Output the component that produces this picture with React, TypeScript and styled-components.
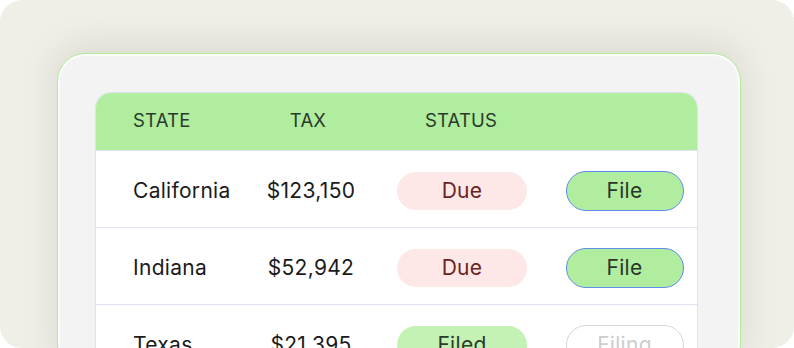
import React from "react";
import styled, { createGlobalStyle } from "styled-components";

const GlobalStyle = createGlobalStyle`
  html, body {
    margin: 0;
    padding: 0;
    background: #ffffff;
  }
  body {
    font-family: Inter, "Liberation Sans", sans-serif;
  }
`;

const Canvas = styled.div`
  width: 794px;
  height: 348px;
  box-sizing: border-box;
  padding: 53px 53px 0 57px;
  border-radius: 22px;
  background: #efefe8;
  overflow: hidden;
`;

const Frame = styled.div`
  box-sizing: border-box;
  height: 320px;
  padding: 38px 42px 0 37px;
  border: 1.5px solid #b0eb9a;
  border-radius: 28px;
  background: #f3f3f4;
  box-shadow: inset 0 0 0 2px #fbfbfb, 0 -6px 36px rgba(110, 110, 90, 0.18);
`;

const Table = styled.div`
  background: #ffffff;
  border: 1px solid #e3e1f1;
  border-bottom: none;
  border-radius: 16px 16px 0 0;
  overflow: hidden;
`;

const columns = "154px 122px 180px 1fr";

const HeaderRow = styled.div`
  display: grid;
  grid-template-columns: ${columns};
  align-items: center;
  height: 57px;
  background: #b0ed9e;
  border-bottom: 1px solid #e3e1f1;
`;

const HeadCell = styled.div<{ $align?: "left" | "center"; $shift?: number }>`
  text-align: ${(p) => p.$align ?? "center"};
  padding-left: ${(p) => (p.$align === "left" ? "37px" : "0")};
  padding-right: ${(p) => (p.$shift ? `${p.$shift}px` : "0")};
  font-size: 18.5px;
  letter-spacing: 0.2px;
  color: #2c3a2c;
  margin-top: -3px;
`;

const Row = styled.div`
  display: grid;
  grid-template-columns: ${columns};
  align-items: center;
  box-sizing: border-box;
  height: 77px;
  padding-top: 3px;
  border-bottom: 1px solid #e3e1f1;
`;

const Cell = styled.div<{ $align?: "left" | "center" }>`
  display: flex;
  justify-content: ${(p) => (p.$align === "left" ? "flex-start" : "center")};
  padding-left: ${(p) => (p.$align === "left" ? "37px" : "0")};
  font-size: 21px;
  letter-spacing: 0.3px;
  color: #1b1b1b;
`;

const Pill = styled.span<{ $tone: "due" | "filed" }>`
  display: inline-flex;
  align-items: center;
  justify-content: center;
  width: 130px;
  height: 38px;
  border-radius: 19px;
  font-size: 21px;
  background: ${(p) => (p.$tone === "due" ? "#fde8e7" : "#c4f1b4")};
  color: ${(p) => (p.$tone === "due" ? "#6a2323" : "#2c3a2c")};
`;

const Action = styled.button<{ $disabled?: boolean }>`
  display: inline-flex;
  align-items: center;
  justify-content: center;
  width: 118px;
  height: 40px;
  box-sizing: border-box;
  border-radius: 20px;
  font-family: inherit;
  font-size: 21px;
  letter-spacing: 0.3px;
  cursor: pointer;
  border: 1.5px solid ${(p) => (p.$disabled ? "#d8d7cf" : "#5e8ded")};
  background: ${(p) => (p.$disabled ? "#ffffff" : "#b0ed9e")};
  color: ${(p) => (p.$disabled ? "#cdcdcd" : "#2c352c")};
`;

const rows = [
  { state: "California", tax: "$123,150", status: "Due", action: "File" },
  { state: "Indiana", tax: "$52,942", status: "Due", action: "File" },
  { state: "Texas", tax: "$21,395", status: "Filed", action: "Filing" },
];

export default function App() {
  return (
    <>
      <GlobalStyle />
      <Canvas>
        <Frame>
          <Table>
            <HeaderRow>
              <HeadCell $align="left">STATE</HeadCell>
              <HeadCell $shift={6}>TAX</HeadCell>
              <HeadCell $shift={2}>STATUS</HeadCell>
              <HeadCell />
            </HeaderRow>
            {rows.map((r) => (
              <Row key={r.state}>
                <Cell $align="left">{r.state}</Cell>
                <Cell>{r.tax}</Cell>
                <Cell>
                  <Pill $tone={r.status === "Due" ? "due" : "filed"}>{r.status}</Pill>
                </Cell>
                <Cell>
                  <Action $disabled={r.action === "Filing"}>{r.action}</Action>
                </Cell>
              </Row>
            ))}
          </Table>
        </Frame>
      </Canvas>
    </>
  );
}
